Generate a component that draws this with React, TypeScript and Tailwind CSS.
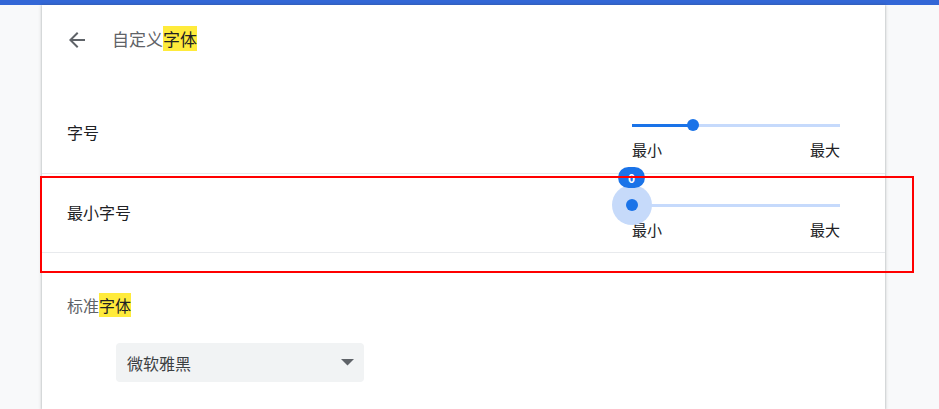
import React from "react";

const font = { fontFamily: '"Noto Sans CJK SC", "Noto Sans", Roboto, sans-serif' };

function Slider({ pct, active }: { pct: number; active?: boolean }) {
  return (
    <div className="w-[208px]">
      <div className="relative h-[14px]">
        <div className="absolute left-0 right-0 top-[6px] h-[3px] bg-[#c6dafc]" />
        <div className="absolute left-0 top-[6px] h-[3px] bg-[#1a73e8]" style={{ width: `${pct}%` }} />
        <div className="absolute top-[7px]" style={{ left: `${pct}%` }}>
          {active && (
            <>
              <div className="absolute -left-[20px] -top-[20px] h-[40px] w-[40px] rounded-full bg-[#c6dafa]" />
              <div className="absolute -left-[14px] -top-[38px] flex h-[21px] w-[27px] items-center justify-center rounded-full bg-[#1a73e8] text-[12px] font-bold leading-none text-white">
                0
              </div>
            </>
          )}
          <div className="absolute -left-[6px] -top-[6px] h-[12px] w-[12px] rounded-full bg-[#1a73e8]" />
        </div>
      </div>
      <div className="mt-[8px] flex justify-between text-[15px] leading-[20px] text-[#202124]">
        <span>最小</span>
        <span>最大</span>
      </div>
    </div>
  );
}

export default function App() {
  return (
    <div className="relative h-[409px] w-[939px] overflow-hidden bg-[#f8f9fa]" style={font}>
      <div className="h-[5px] bg-[#3367d6]" />
      <div className="ml-[42px] h-[404px] w-[843px] bg-white shadow-[0_0_2px_rgba(60,64,67,0.3),0_1px_3px_1px_rgba(60,64,67,0.15)]">
        {/* header */}
        <div className="flex h-[70px] items-center pl-[23px]">
          <svg width="24" height="24" viewBox="0 0 24 24" className="text-[#5f6368]">
            <path fill="currentColor" d="M20 11H7.83l5.59-5.59L12 4l-8 8 8 8 1.41-1.41L7.83 13H20v-2z" />
          </svg>
          <div className="mb-[3px] ml-[23px] text-[17px] leading-[19px] text-[#5f6368]">
            自定义<span className="bg-[#ffeb3b] text-[#202124]">字体</span>
          </div>
        </div>
        <div className="h-[17px]" />
        {/* row 1 */}
        <div className="flex h-[82px] items-start justify-between border-b border-[#e8eaed] pl-[25px] pr-[45px]">
          <div className="mt-[30px] text-[16px] leading-[20px] text-[#202124]">字号</div>
          <div className="mt-[26px]">
            <Slider pct={29.3} />
          </div>
        </div>
        {/* row 2 */}
        <div className="flex h-[79px] items-start justify-between border-b border-[#e8eaed] pl-[25px] pr-[45px]">
          <div className="mt-[28px] text-[16px] leading-[20px] text-[#202124]">最小字号</div>
          <div className="mt-[24px]">
            <Slider pct={0} active />
          </div>
        </div>
        {/* standard font */}
        <div className="pl-[25px] pt-[43px]">
          <div className="text-[16px] leading-[18px] text-[#5f6368]">
            标准<span className="bg-[#ffeb3b] text-[#202124]">字体</span>
          </div>
          <div className="ml-[49px] mt-[29px] flex h-[39px] w-[248px] items-center justify-between rounded-[4px] bg-[#f1f3f4] pl-[11px] pr-[10px]">
            <span className="text-[16px] text-[#3c4043]">微软雅黑</span>
            <svg width="13" height="7" viewBox="0 0 13 7">
              <path d="M0 0h13L6.5 6.5z" fill="#5f6368" />
            </svg>
          </div>
        </div>
      </div>
      {/* red annotation rectangle */}
      <div className="pointer-events-none absolute left-[40px] top-[176px] z-10 h-[97px] w-[874px] border-2 border-[#ff0000]" />
    </div>
  );
}
